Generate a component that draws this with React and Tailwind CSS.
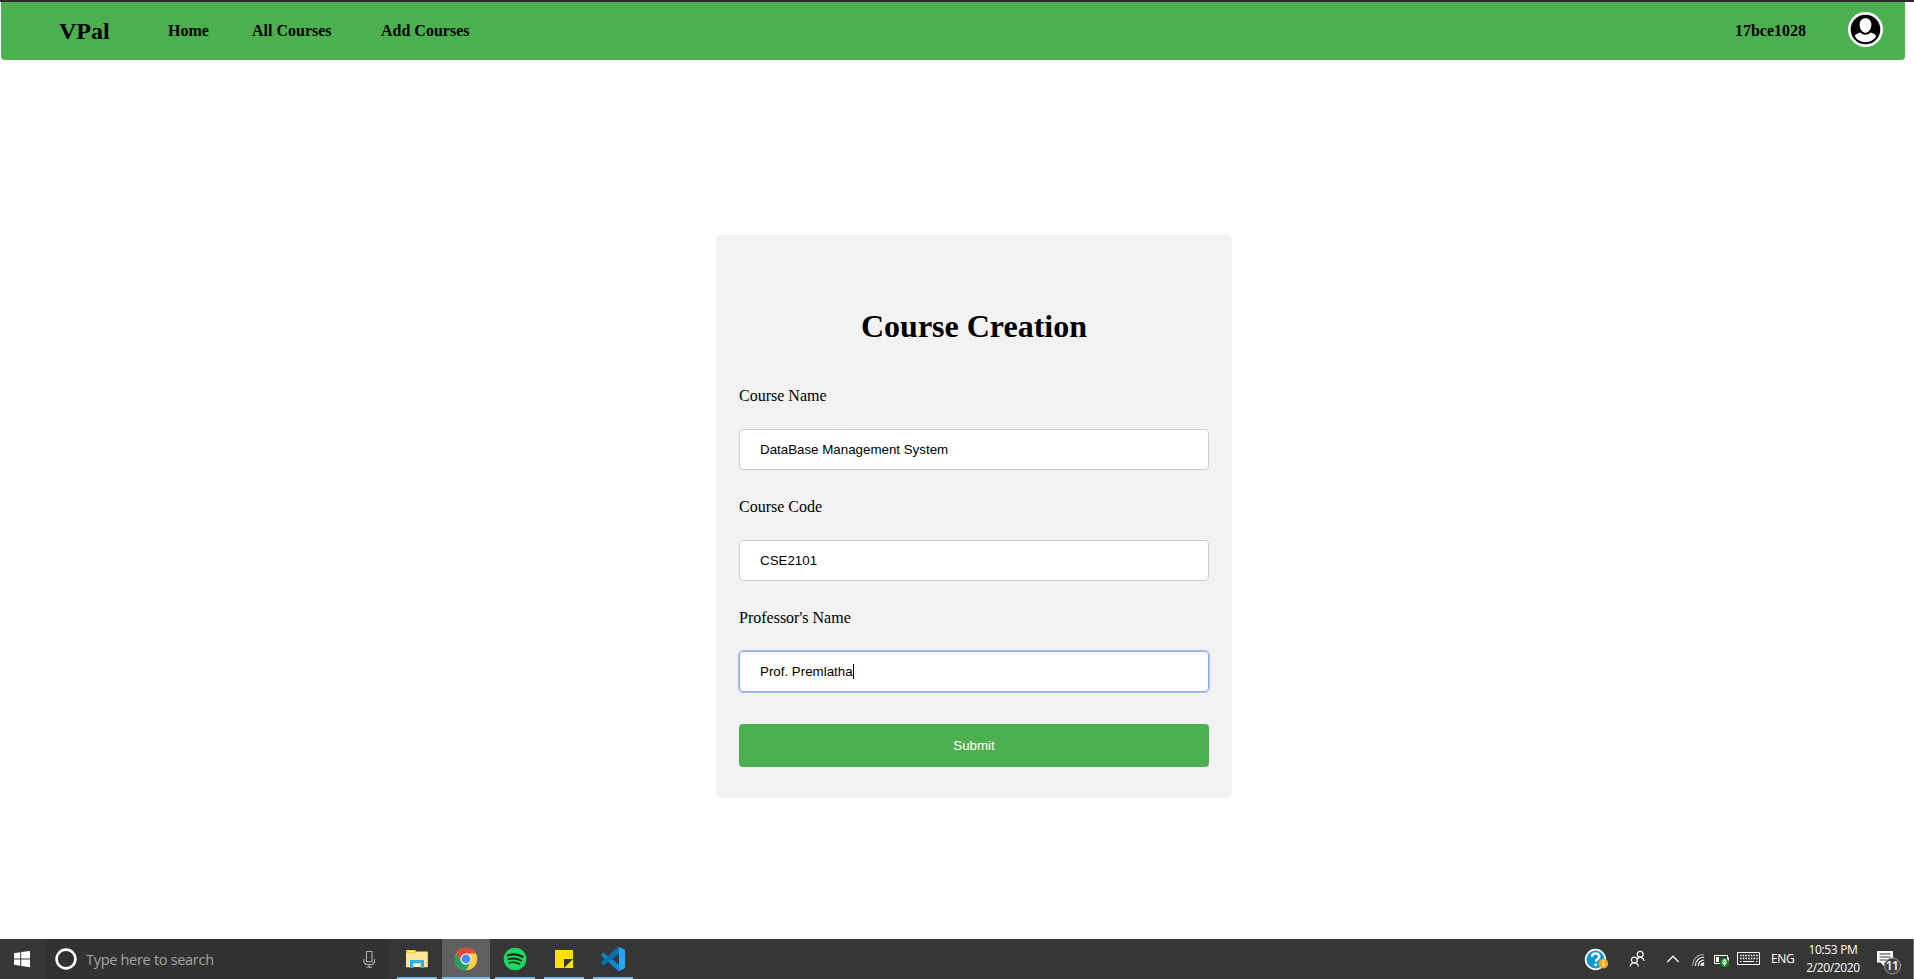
import React from "react";

const navLinks = [
  { label: "Home", spacing: "ml-[58px] w-[42px]" },
  { label: "All Courses", spacing: "ml-[42px] w-[80px]" },
  { label: "Add Courses", spacing: "ml-[49px] w-[90px]" },
];

function Avatar() {
  return (
    <svg className="h-[35px] w-[35px]" viewBox="0 0 35 35">
      <circle cx="17.5" cy="17.5" r="17.5" fill="#fff" />
      <circle cx="17.5" cy="17.5" r="14.8" fill="#000" />
      <path d="M17.500 6.200c3.500 0 5.900 2.600 5.900 6.400 0 4.200-2.600 8.300-5.900 8.300s-5.900-4.100-5.900-8.300c0-3.800 2.400-6.400 5.900-6.400z" fill="#fff" />
      <path d="M12.400 20.600c1.300 1.400 3 2.200 5.100 2.200s3.800-.8 5.100-2.200c2.400.4 4.400 1.500 5.600 3.400-2 4-6.100 6.200-10.700 6.200S8.800 28 6.800 24c1.200-1.900 3.200-3 5.600-3.400z" fill="#fff" />
    </svg>
  );
}

function Navbar() {
  return (
    <nav className="mr-[9px] ml-px flex h-[58px] items-center rounded-b bg-[#4caf50] pr-[22px] pl-[58px] font-bold whitespace-nowrap">
      <a className="w-[51px] text-2xl leading-none">VPal</a>
      {navLinks.map((link) => (
        <a key={link.label} className={link.spacing}>{link.label}</a>
      ))}
      <span className="mr-[42px] ml-auto">17bce1028</span>
      <span className="-mt-[3px]"><Avatar /></span>
    </nav>
  );
}

function Field({ label, value, focused }) {
  return (
    <div className="mb-[29px]">
      <label className="block h-6 text-base leading-6">{label}</label>
      <div
        className={
          "mt-[21px] flex h-[41px] items-center rounded border bg-white px-5 font-['Liberation_Sans',Arial,sans-serif] text-[13.333px] " +
          (focused ? "border-[#8ab0ea] outline-1 outline-[#a0c3fb]" : "border-[#ccc]")
        }
      >
        <span>{value}</span>
        {focused && <span className="h-[15px] w-px bg-black" />}
      </div>
    </div>
  );
}

function CourseForm() {
  return (
    <form className="mt-[175px] ml-[716px] h-[563px] w-[516px] rounded-[5px] bg-[#f2f2f2] px-[23px] pt-[71px]">
      <h1 className="text-center text-[32px] leading-10 font-bold">Course Creation</h1>
      <div className="mt-[38px] flex flex-col">
        <Field label="Course Name" value="DataBase Management System" />
        <div className="-mt-1"><Field label="Course Code" value="CSE2101" /></div>
        <div className="-mt-1"><Field label="Professor's Name" value="Prof. Premlatha" focused /></div>
      </div>
      <button type="button" className="mt-[3px] h-[43px] w-full rounded bg-[#4caf50] font-['Liberation_Sans',Arial,sans-serif] text-[13.333px] text-white">
        Submit
      </button>
    </form>
  );
}

function TaskApp({ children, active, gap }) {
  return (
    <div className={"flex h-10 flex-col items-center justify-between " + gap + (active ? " w-12 bg-[#606060]" : " w-10")}>
      <div className="flex h-[38px] items-center pt-[2px]">{children}</div>
      <div className="h-[2px] w-full bg-[#76b9ed]" />
    </div>
  );
}

function FolderIcon() {
  return (
    <svg className="h-6 w-6" viewBox="0 0 24 24">
      <path d="M1 3h9.500v1.500H22a.8.8 0 0 1 .8.8v14.900H1z" fill="#ffe694" />
      <path d="M1 3h9.500v3H1z" fill="#f8cb36" />
      <path d="M3 4h6v1H3z" fill="#fff6cc" />
      <path d="M5 13h14v8h-3.500v-4.500h-7V21H5z" fill="#35aee0" />
      <path d="M8.500 16.500h7v3.700h-7z" fill="#fff0b8" />
      <path d="M8.500 20.200h7v.8h-7z" fill="#363636" />
    </svg>
  );
}

function ChromeIcon() {
  return (
    <svg className="h-6 w-6" viewBox="0 0 24 24">
      <circle cx="12" cy="12" r="11.200" fill="#ffcd40" />
      <path d="M2.300 6.400A11.200 11.200 0 0 1 21.700 6.400H12a5.600 5.600 0 0 0-4.850 8.400z" fill="#dd4b3e" />
      <path d="M2.300 6.400A11.200 11.200 0 0 0 12 23.200l4.850-8.400a5.600 5.600 0 0 1-9.700 0z" fill="#1da462" />
      <circle cx="12" cy="12" r="5.500" fill="#f3f3f3" />
      <circle cx="12" cy="12" r="4.400" fill="#4a8af4" />
    </svg>
  );
}

function SpotifyIcon() {
  return (
    <svg className="h-6 w-6" viewBox="0 0 24 24" fill="none" stroke="#16251a" strokeLinecap="round">
      <circle cx="12" cy="12" r="11.300" fill="#1ed760" stroke="none" />
      <path d="M5 8.300c5-1.400 10.500-.9 14.500 1.500" strokeWidth="2.200" />
      <path d="M5.600 12.200c4.300-1.200 8.900-.7 12.400 1.400" strokeWidth="1.900" />
      <path d="M6.200 15.700c3.700-.9 7.400-.5 10.400 1.300" strokeWidth="1.600" />
    </svg>
  );
}

function NotesIcon() {
  return (
    <svg className="h-6 w-6" viewBox="0 0 24 24">
      <path d="M3 3h18v9h-9v9H3z" fill="#ffe200" />
      <path d="M12 21v-9h9z" fill="#363636" />
      <path d="M12 21l9-9v9z" fill="#ffe200" />
    </svg>
  );
}

function CodeIcon() {
  return (
    <svg className="h-6 w-6" viewBox="0 0 24 24">
      <path d="M23.150 2.587L18.210.210a1.494 1.494 0 0 0-1.705.290l-9.460 8.630-4.120-3.128a.999.999 0 0 0-1.276.057L.327 7.261A1 1 0 0 0 .326 8.740L3.899 12 .326 15.260a1 1 0 0 0 .001 1.479L1.650 17.940a.999.999 0 0 0 1.276.057l4.120-3.128 9.460 8.630a1.492 1.492 0 0 0 1.704.290l4.942-2.377A1.500 1.500 0 0 0 24 20.060V3.939a1.500 1.500 0 0 0-.850-1.352zM18.004 17.448L10.826 12l7.178-5.448v10.896z" fill="#1184cb" />
      <path d="M.326 15.260L16.505.5a1.494 1.494 0 0 1 1.499-.35v6.402L2.926 17.997a.999.999 0 0 1-1.276-.057L.327 16.739a1 1 0 0 1-.001-1.479z" fill="#0871b5" />
      <path d="M18.004.130l5.146 2.457a1.500 1.500 0 0 1 .85 1.352V20.060a1.500 1.500 0 0 1-.85 1.352l-5.146 2.450z" fill="#2aa6f0" />
    </svg>
  );
}

function Tray() {
  return (
    <div className="ml-auto flex h-10 items-center text-white">
      <svg className="h-10 w-8" viewBox="0 0 32 40">
        <circle cx="15.500" cy="20.500" r="10.700" fill="#fff" />
        <circle cx="15.500" cy="20.500" r="9" fill="#0795d4" />
        <path d="M12 17.800c0-4.300 7.300-4.400 7.300-.3 0 2.600-3.500 2.600-3.500 5.300" fill="none" stroke="#fff" strokeWidth="2.500" />
        <circle cx="15.700" cy="25.700" r="1.500" fill="#fff" />
        <circle cx="23.400" cy="24.600" r="4.800" fill="#f9a91c" />
        <path d="M23.400 23.700v3.600M23.400 21.300v1.300" stroke="#fff" strokeWidth="1.500" />
      </svg>
      <svg className="ml-4 h-10 w-5" viewBox="0 0 20 40" fill="none" stroke="#eee" strokeWidth="1.300">
        <circle cx="6.300" cy="21" r="2.900" />
        <path d="M2.200 27.500c.2-2.200 1.900-3.600 4.100-3.600s3.800 1.400 4 3.600" />
        <circle cx="12.200" cy="15.300" r="2.900" />
        <path d="M8.800 20.200c.8-1.200 2-1.800 3.400-1.800 2.100 0 3.500 1.300 3.700 3.600" />
      </svg>
      <svg className="ml-[17px] h-10 w-4" viewBox="0 0 16 40" fill="none" stroke="#f4f4f4" strokeWidth="1.400">
        <path d="m2.300 23 5.700-5.800 5.700 5.800" />
      </svg>
      <svg className="ml-[9px] h-10 w-[18px]" viewBox="0 0 18 40" fill="none" strokeWidth="1.200">
        <path d="M2.800 26.500C2.800 20 7.500 15.500 14 15.500" stroke="#aaa" />
        <path d="M5.300 27c0-5 3.600-8.800 8.900-8.800" stroke="#e2e2e2" />
        <path d="M8.200 27c0-3.400 2.500-6 6-6" stroke="#f2f2f2" />
        <path d="M11 27c0-1.800 1.400-3.200 3.200-3.200" stroke="#fff" />
        <circle cx="13" cy="25.800" r="1.300" fill="#fff" />
      </svg>
      <svg className="ml-1 h-10 w-5" viewBox="0 0 20 40" fill="none">
        <path d="M2.500 16.500h13v8h-13z" stroke="#fff" />
        <path d="M4 18h3v5H4zM16 18.500h1v4h-1z" fill="#fff" />
        <circle cx="12.500" cy="23.700" r="4.600" fill="#0b8a1c" />
        <path d="M12.500 20.500c2.500 2.200 2.200 4.500 0 4.500s-2.500-2.300 0-4.500zM12.500 23v4" stroke="#fff" strokeWidth="1.100" />
      </svg>
      <svg className="ml-1 h-10 w-[26px]" viewBox="0 0 26 40" fill="none" stroke="#fff">
        <path d="M1.500 13.500h22v12h-22z" />
        <path d="M4 16.500h18M4 19.500h18" strokeDasharray="1.500 1.200" strokeWidth="1.300" />
        <path d="M4 22.500h1.500M7 22.500h11M20 22.500h1.500" />
      </svg>
      <span className="ml-[9px] w-[25px] text-xs tracking-[-0.3px]">ENG</span>
      <div className="ml-[5px] w-16 text-center text-[12px] leading-[18px] tracking-[-0.350px] whitespace-nowrap">
        <div>10:53 PM</div>
        <div>2/20/2020</div>
      </div>
      <div className="relative ml-[10px] h-10 w-[38px]">
        <svg className="h-10 w-[38px]" viewBox="0 0 38 40">
          <path d="M2 12h16v11.500H9V27l-3.500-3.500H2z" fill="#fff" />
          <path d="M4.500 15h11M4.500 18h11M4.500 21h7" stroke="#363636" />
          <circle cx="17.500" cy="27" r="8" fill="#424242" stroke="#999" />
        </svg>
        <span className="absolute top-[19px] left-[9px] w-4 text-center text-[12px] leading-[15px] font-semibold tracking-[-0.5px]">11</span>
      </div>
      <div className="h-10 w-px bg-[#777]" />
    </div>
  );
}

function Taskbar() {
  return (
    <footer className="flex h-10 bg-[#363636] font-['Open_Sans','Noto_Sans',sans-serif]">
      <svg className="h-10 w-[46px]" viewBox="0 0 46 40" fill="#fff">
        <path d="M14 14.200l6.200-.9v6.200H14zM21.200 13.100l8.800-1.200v7.600h-8.800zM14 20.500h6.200v6.200l-6.200-.9zM21.200 20.500H30v7.700L21.200 27z" />
      </svg>
      <div className="flex w-[344px] items-center bg-[#323232] text-[#a6a6a6]">
        <svg className="ml-2 h-10 w-6" viewBox="0 0 24 40">
          <circle cx="12" cy="20" r="9.400" fill="none" stroke="#fff" strokeWidth="2.600" />
        </svg>
        <span className="ml-2 pt-[2px] text-[14.500px] tracking-[-0.300px] whitespace-nowrap">Type here to search</span>
        <svg className="mr-[13px] ml-auto h-10 w-4" viewBox="0 0 16 40" fill="none" stroke="#b0b0b0" strokeWidth="1.100">
          <path d="M5.500 12.500h5.500v10.200H5.500z" />
          <path d="M3 20v3.500l2 2h6.500l2-2V20M8.200 25.500v3M5.500 28.200H11" />
        </svg>
      </div>
      <TaskApp gap="ml-[7px]"><FolderIcon /></TaskApp>
      <TaskApp gap="ml-[5px]" active><ChromeIcon /></TaskApp>
      <TaskApp gap="ml-[5px]"><SpotifyIcon /></TaskApp>
      <TaskApp gap="ml-[9px]"><NotesIcon /></TaskApp>
      <TaskApp gap="ml-[9px]"><CodeIcon /></TaskApp>
      <Tray />
    </footer>
  );
}

export default function App() {
  return (
    <div className="flex h-[979px] w-[1914px] flex-col overflow-hidden bg-white font-['Liberation_Serif','Times_New_Roman',serif] text-base text-black">
      <div className="h-[2px] bg-[#2b2b2b]" />
      <Navbar />
      <main className="flex-1">
        <CourseForm />
      </main>
      <Taskbar />
    </div>
  );
}
